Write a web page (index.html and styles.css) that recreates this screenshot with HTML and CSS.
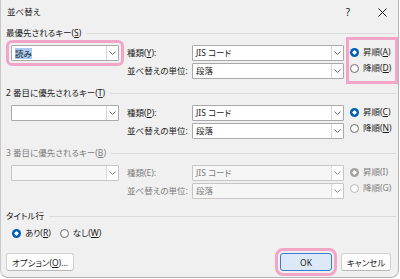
FILE: index.html
```html
<!DOCTYPE html>
<html lang="ja">
<head>
    <meta charset="UTF-8">
    <title>並べ替え</title>
    <link rel="stylesheet" href="styles.css">
</head>
<body>
    <div class="dialog">
        <div class="titlebar">
            <span class="title">並べ替え</span>
            <span class="help">?</span>
            <span class="close">
                <svg width="9" height="9" viewBox="0 0 9 9"><path d="M0.5 0.5L8.5 8.5M8.5 0.5L0.5 8.5" stroke="#222" stroke-width="1"/></svg>
            </span>
        </div>
        <div class="content">
            <section class="group">
                <div class="group-head"><span>最優先されるキー(<u>S</u>)</span></div>
                <div class="key-row">
                    <div class="combo key marked"><span class="value"><span class="sel">読み</span></span><span class="arrow"><svg width="7" height="4" viewBox="0 0 7 4"><path d="M0.5 0.5L3.5 3.5L6.5 0.5" fill="none" stroke="#666"/></svg></span></div>
                    <label class="field-label row1"><span>種類(<u>Y</u>):</span></label>
                    <div class="combo type row1"><span class="value">JIS コード</span><span class="arrow"><svg width="7" height="4" viewBox="0 0 7 4"><path d="M0.5 0.5L3.5 3.5L6.5 0.5" fill="none" stroke="#666"/></svg></span></div>
                    <label class="field-label row2"><span>並べ替えの単位:</span></label>
                    <div class="combo type row2"><span class="value">段落</span><span class="arrow"><svg width="7" height="4" viewBox="0 0 7 4"><path d="M0.5 0.5L3.5 3.5L6.5 0.5" fill="none" stroke="#666"/></svg></span></div>
                    <div class="radios marked">
                        <div class="radio"><span class="dot on"></span><span>昇順(<u>A</u>)</span></div>
                        <div class="radio"><span class="dot"></span><span>降順(<u>D</u>)</span></div>
                    </div>
                </div>
            </section>

            <section class="group">
                <div class="group-head"><span>2 番目に優先されるキー(<u>T</u>)</span></div>
                <div class="key-row">
                    <div class="combo key"><span class="value"></span><span class="arrow"><svg width="7" height="4" viewBox="0 0 7 4"><path d="M0.5 0.5L3.5 3.5L6.5 0.5" fill="none" stroke="#666"/></svg></span></div>
                    <label class="field-label row1"><span>種類(<u>P</u>):</span></label>
                    <div class="combo type row1"><span class="value">JIS コード</span><span class="arrow"><svg width="7" height="4" viewBox="0 0 7 4"><path d="M0.5 0.5L3.5 3.5L6.5 0.5" fill="none" stroke="#666"/></svg></span></div>
                    <label class="field-label row2"><span>並べ替えの単位:</span></label>
                    <div class="combo type row2"><span class="value">段落</span><span class="arrow"><svg width="7" height="4" viewBox="0 0 7 4"><path d="M0.5 0.5L3.5 3.5L6.5 0.5" fill="none" stroke="#666"/></svg></span></div>
                    <div class="radios">
                        <div class="radio"><span class="dot on"></span><span>昇順(<u>C</u>)</span></div>
                        <div class="radio"><span class="dot"></span><span>降順(<u>N</u>)</span></div>
                    </div>
                </div>
            </section>

            <section class="group disabled">
                <div class="group-head"><span>3 番目に優先されるキー(<u>B</u>)</span></div>
                <div class="key-row">
                    <div class="combo key"><span class="value"></span><span class="arrow"><svg width="7" height="4" viewBox="0 0 7 4"><path d="M0.5 0.5L3.5 3.5L6.5 0.5" fill="none" stroke="#888"/></svg></span></div>
                    <label class="field-label row1"><span>種類(E):</span></label>
                    <div class="combo type row1"><span class="value">JIS コード</span><span class="arrow"><svg width="7" height="4" viewBox="0 0 7 4"><path d="M0.5 0.5L3.5 3.5L6.5 0.5" fill="none" stroke="#888"/></svg></span></div>
                    <label class="field-label row2"><span>並べ替えの単位:</span></label>
                    <div class="combo type row2"><span class="value">段落</span><span class="arrow"><svg width="7" height="4" viewBox="0 0 7 4"><path d="M0.5 0.5L3.5 3.5L6.5 0.5" fill="none" stroke="#888"/></svg></span></div>
                    <div class="radios">
                        <div class="radio"><span class="dot on"></span><span>昇順(I)</span></div>
                        <div class="radio"><span class="dot"></span><span>降順(G)</span></div>
                    </div>
                </div>
            </section>

            <section class="title-row">
                <div class="group-head"><span>タイトル行</span></div>
                <div class="title-options">
                    <div class="radio"><span class="dot on"></span><span>あり(<u>R</u>)</span></div>
                    <div class="radio"><span class="dot"></span><span>なし(<u>W</u>)</span></div>
                </div>
            </section>

            <div class="buttons">
                <button class="btn">オプション(<u>O</u>)...</button>
                <button class="btn primary marked">OK</button>
                <button class="btn">キャンセル</button>
            </div>
        </div>
    </div>
</body>
</html>
```

FILE: styles.css
```css
* {
    margin: 0;
    padding: 0;
    box-sizing: border-box;
}

body {
    background: #ffffff;
    font-family: "Noto Sans", "Noto Sans CJK JP", sans-serif;
    font-size: 8.5px;
    line-height: 14px;
    color: #1b1b1b;
    font-feature-settings: "palt";
}

u {
    text-decoration: underline;
    text-underline-offset: 1px;
}

.dialog {
    width: 399px;
    height: 278px;
    background: #f0f0f0;
    border: 1px solid #b4b4b4;
    border-top: none;
    border-left: 1px solid #c8c8c8;
    border-radius: 0 0 8px 8px;
    overflow: hidden;
}

/* title bar */
.titlebar {
    display: flex;
    align-items: center;
    height: 24px;
    padding: 0 6px 0 6px;
}

.title {
    flex: 1;
}

.help {
    width: 10px;
    text-align: center;
    font-size: 10px;
}

.close {
    width: 19px;
    margin-left: 20px;
    display: flex;
    justify-content: center;
}

/* body */
.content {
    padding: 2px 0 0 5px;
}

.group {
    margin-bottom: 7px;
}

.group-head {
    display: flex;
    align-items: center;
    gap: 5px;
    height: 14px;
    white-space: nowrap;
}

.group-head::after {
    content: "";
    flex: 1;
    border-top: 1px solid #dadada;
    margin-right: 2px;
}

.key-row {
    display: grid;
    grid-template-columns: 116px 65px 152px 1fr;
    grid-template-rows: 16px 16px;
    row-gap: 2px;
    margin-top: 5px;
    padding-left: 5px;
}

.field-label {
    display: flex;
    align-items: center;
    grid-column: 2;
    white-space: nowrap;
}

.row1 {
    grid-row: 1;
}

.row2 {
    grid-row: 2;
}

.combo {
    display: flex;
    height: 16px;
    background: #ffffff;
    border: 1px solid #a9a9a9;
    border-radius: 1px;
}

.combo.key {
    grid-column: 1;
    grid-row: 1;
    width: 108px;
}

.combo.type {
    grid-column: 3;
}

.combo .value {
    flex: 1;
    display: flex;
    align-items: center;
    padding-left: 3px;
    white-space: nowrap;
}

.combo .sel {
    background: #a9cbef;
    line-height: 11px;
}

.combo .arrow {
    width: 12px;
    display: flex;
    align-items: center;
    justify-content: center;
    border-left: 1px solid #d6d6d6;
}

.marked {
    outline: 3px solid #f2a5c7;
    outline-offset: 2px;
}

.radios {
    grid-column: 4;
    grid-row: 1 / span 2;
    display: flex;
    flex-direction: column;
    gap: 2px;
    padding: 0 0 0 6px;
}

.radios.marked {
    margin: -8px 0 -5px 2px;
    padding: 8px 0 0 4px;
    outline-offset: -3px;
}

.radio {
    display: flex;
    align-items: center;
    gap: 4px;
    height: 14px;
    white-space: nowrap;
}

.dot {
    width: 9px;
    height: 9px;
    flex: none;
    border-radius: 50%;
    border: 1px solid #6e6e6e;
    background: #fafafa;
}

.dot.on {
    border: none;
    background: radial-gradient(circle, #ffffff 0 1.8px, #005fb8 2.3px);
}

/* disabled third key */
.disabled {
    color: #7d7d7d;
}

.disabled .combo {
    background: #f6f6f6;
    border-color: #c6c6c6;
}

.disabled .combo .arrow {
    background: #ffffff;
    border-left-color: #dcdcdc;
}

.disabled .dot {
    border-color: #b9b9b9;
}

.disabled .dot.on {
    background: radial-gradient(circle, #ffffff 0 1.8px, #a3a3a3 2.3px);
}

.title-row {
    margin-top: 10px;
}

.title-options {
    display: flex;
    gap: 9px;
    margin-top: 3px;
    padding-left: 6px;
}

/* buttons */
.buttons {
    display: flex;
    gap: 9px;
    margin-top: 13px;
    padding-right: 7px;
}

.btn {
    height: 18px;
    padding: 0 5px;
    font-family: inherit;
    font-size: 8.5px;
    color: #1b1b1b;
    background: #fdfdfd;
    border: 1px solid #d0d0d0;
    border-bottom-color: #b8b8b8;
    border-radius: 3px;
    white-space: nowrap;
    font-feature-settings: "palt";
}

.btn.primary {
    margin-left: auto;
    width: 52px;
    background: #dde9f6;
    border: 1px solid #3b7bd0;
}

.buttons .btn:last-child {
    width: 50px;
    padding: 0;
}
```
